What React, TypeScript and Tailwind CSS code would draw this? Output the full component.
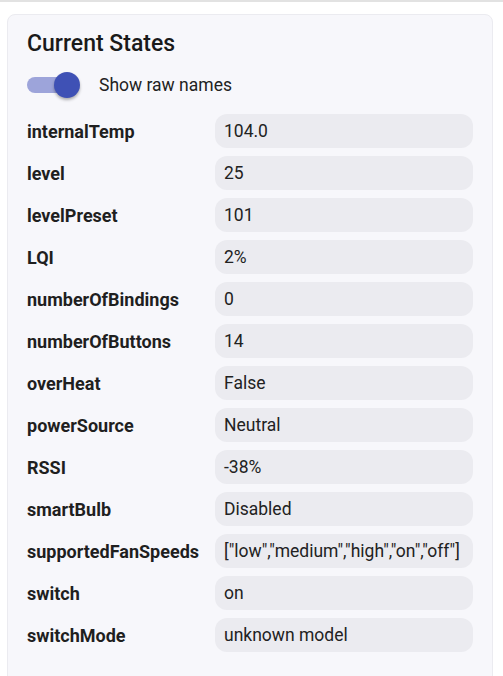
const states: [string, string][] = [
  ['internalTemp', '104.0'],
  ['level', '25'],
  ['levelPreset', '101'],
  ['LQI', '2%'],
  ['numberOfBindings', '0'],
  ['numberOfButtons', '14'],
  ['overHeat', 'False'],
  ['powerSource', 'Neutral'],
  ['RSSI', '-38%'],
  ['smartBulb', 'Disabled'],
  ['supportedFanSpeeds', '["low","medium","high","on","off"]'],
  ['switch', 'on'],
  ['switchMode', 'unknown model'],
];

export default function App() {
  return (
    <div className="min-h-screen bg-white font-['Roboto',sans-serif] text-[#1d1b20]">
      <div className="border-t-2 border-[#e2e2e2] pt-3 pl-[7px] pr-[10px]">
        <div className="rounded-lg border border-[#ebebf0] bg-[#f7f7fb] pl-[19px] pr-[18px] pt-[14px] pb-10">
          <h2 className="text-[23px] font-medium leading-[30px] text-[#1a1a1a]">Current States</h2>
          <label className="mt-[13px] flex items-center gap-[19px] h-[26px]">
            <span className="relative block h-[26px] w-[53px]">
              <span className="absolute left-0 top-[5px] h-[16px] w-[45px] rounded-full bg-[#9da4da]" />
              <span className="absolute right-0 top-0 h-[26px] w-[26px] rounded-full bg-[#3f51b5] shadow-[0_2px_3px_rgba(0,0,0,0.3)]" />
            </span>
            <span className="text-[17.5px] text-[#222]">Show raw names</span>
          </label>
          <div className="mt-[16px] flex flex-col gap-2">
            {states.map(([name, value]) => (
              <div key={name} className="flex items-center">
                <div className="w-[188px] shrink-0 text-[18px] font-bold text-[#1f1f1f]">{name}</div>
                <div className="h-[34px] w-[258px] flex items-center rounded-xl bg-[#ebebf0] px-[9px] text-[17.5px] text-[#222] whitespace-nowrap">
                  {value}
                </div>
              </div>
            ))}
          </div>
        </div>
      </div>
    </div>
  );
}
